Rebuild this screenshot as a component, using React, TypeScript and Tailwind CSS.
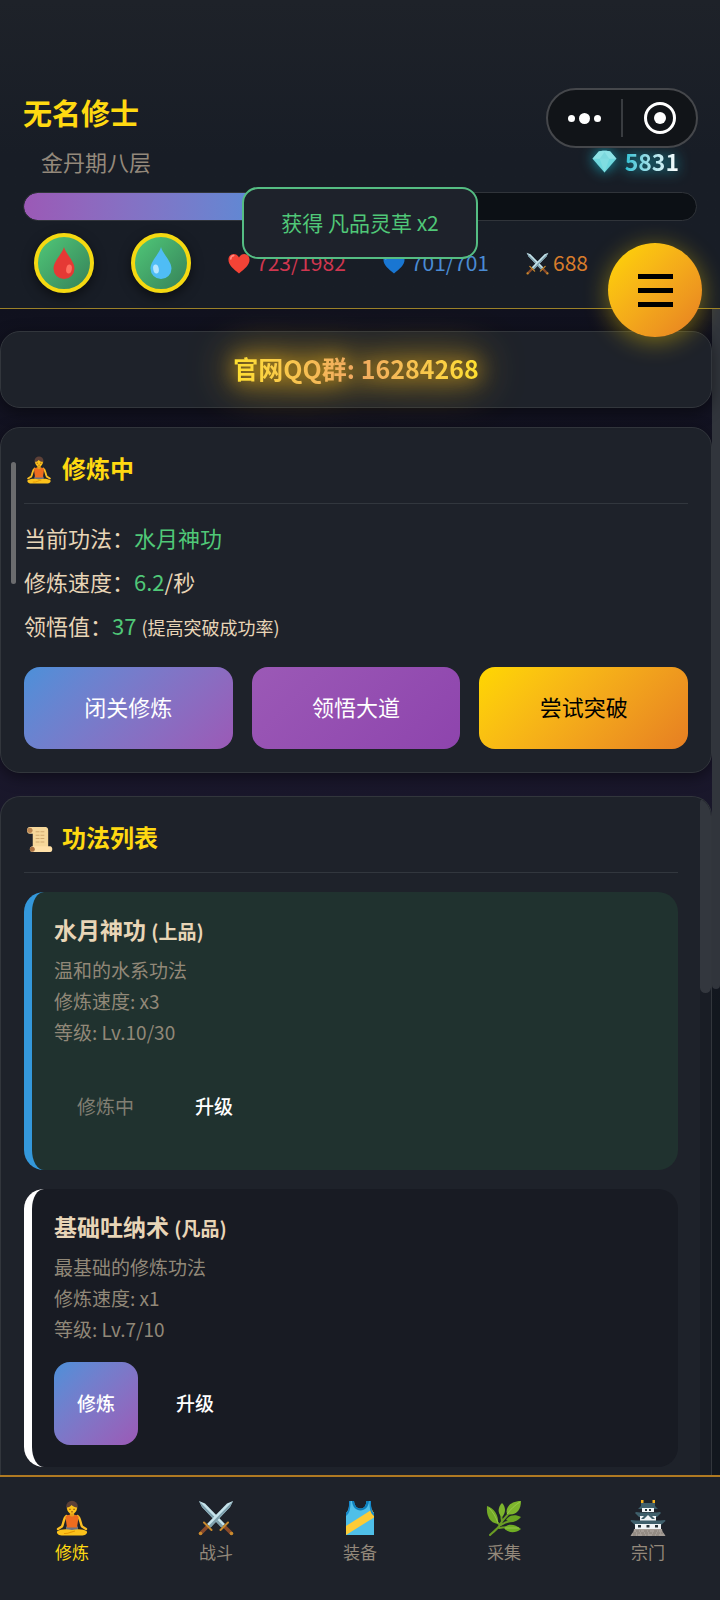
import type { ReactNode } from "react";

type IconProps = { className?: string };

function Drop({ className, color, shine, flip }: IconProps & { color: string; shine: string; flip?: boolean }) {
  return (
    <svg viewBox="0 0 22 32" className={className} aria-hidden="true">
      <path d="M11 0C10 6 .5 14 .5 21.500a10.500 10.500 0 0 0 21 0C21.500 14 12 6 11 0Z" fill={color} />
      <ellipse cx={flip ? 6 : 16} cy="22" rx="2.800" ry="4.500" fill={shine} transform={flip ? "rotate(-10 6 22)" : "rotate(10 16 22)"} />
    </svg>
  );
}

function Heart({ className, color, light }: IconProps & { color: string; light: string }) {
  return (
    <svg viewBox="0 0 24 22" className={className} aria-hidden="true">
      <path d="M12 22C6 17 .5 13 .5 7 .5 3 3.200.6 6.300.6 9 .6 11 2.300 12 4.500 13 2.300 15 .6 17.700.6c3.100 0 5.800 2.400 5.800 6.400C23.500 13 18 17 12 22Z" fill={color} />
      <path d="M3 6c0-2 1.300-3.600 3.200-3.600" stroke={light} strokeWidth="1.800" strokeLinecap="round" fill="none" />
    </svg>
  );
}

function Gem({ className }: IconProps) {
  return (
    <svg viewBox="0 0 26 24" className={className} aria-hidden="true">
      <path d="M7 1.500C9 .5 17 .5 19 1.500L25.500 9 13 23.500.5 9Z" fill="#6fd8de" />
      <path d="M7 1.500C9 .5 17 .5 19 1.500L25.500 9H.5Z" fill="#8ee3e6" />
      <path d="M8 9h10l-5 14.500Z" fill="#80dde1" />
      <path d="m13 2 5 7H8Z" fill="#7cd9de" />
    </svg>
  );
}

function Sword() {
  return (
    <>
      <path d="m1 1 6 2.500L27 24l-3.500 3.500L4 7Z" fill="#c6e4ec" />
      <path d="m1 1 24.500 25-2 1.500L4 7Z" fill="#7d9fac" />
      <path d="m27 27 6 6" stroke="#8a4b2a" strokeWidth="3.600" strokeLinecap="round" />
      <path d="m22.500 30 7.500-7.500" stroke="#c98a2d" strokeWidth="2" strokeLinecap="round" />
      <circle cx="33.500" cy="33.500" r="1.800" fill="#c98a2d" />
    </>
  );
}

function Swords({ className }: IconProps) {
  return (
    <svg viewBox="0 0 36 36" className={className} aria-hidden="true">
      <Sword />
      <g transform="matrix(-1 0 0 1 36 0)">
        <Sword />
      </g>
    </svg>
  );
}

function Meditator({ className }: IconProps) {
  return (
    <svg viewBox="0 0 36 36" className={className} aria-hidden="true">
      <path d="M12.500 16C9.500 18 10 22 8 26.500L4 29" stroke="#fbbf24" strokeWidth="2.400" strokeLinecap="round" fill="none" />
      <path d="M23.500 16c3 2 2.500 6 4.500 10.500l4 2.500" stroke="#fbbf24" strokeWidth="2.400" strokeLinecap="round" fill="none" />
      <path d="M12 30h12v-3.500H12Z" fill="#6b7280" />
      <path d="M3 31.500c3-2 8-3 15-1.500 7-1.500 12-.5 15 1.500.5 2.500-2 4-6 4H9c-4 0-6.500-1.500-6-4Z" fill="#fcc21b" />
      <path d="M10 33.500c5 .5 7-2 11-2.500" stroke="#e59600" strokeWidth="1.100" fill="none" />
      <path d="M11.500 17.500c0-2 2.500-2.700 6.500-2.700s6.500.7 6.500 2.700L23 27.500H13Z" fill="#ed6c1f" />
      <path d="M15.800 12h4.400v3.300c0 1.700-4.400 1.700-4.400 0Z" fill="#e5a01a" />
      <circle cx="18" cy="6.500" r="5.800" fill="#5d4037" />
      <path d="M13 7.500c2 0 3.500-1 4.500-2.500C19 6.500 21 7.500 23 7.500c0 4-2.200 6-5 6s-5-2-5-6Z" fill="#fcc21b" />
      <path d="M15 9.300h1.800m2.400 0H21m-4 2.400c.8.400 1.200.4 2 0" stroke="#7c3f1d" strokeWidth=".8" fill="none" />
    </svg>
  );
}

function Scroll({ className }: IconProps) {
  return (
    <svg viewBox="0 0 28 28" className={className} aria-hidden="true">
      <path d="M4 1h15c4 0 4 2 4 4v17H7V8H4C0 8 0 1 4 1Z" fill="#f6d79a" />
      <path d="M7 21h18c3 0 3 6 0 6H7c-4 0-4-6 0-6Z" fill="#ffe0a8" />
      <circle cx="4" cy="4.500" r="2.800" fill="#b98450" />
      <circle cx="6.500" cy="24" r="2.600" fill="#a87042" />
      <path d="M10 6h10M10 9.500h10M10 13h10M10 16.500h9" stroke="#d2aa70" strokeWidth="1.100" strokeDasharray="4 1" />
    </svg>
  );
}

function Vest({ className }: IconProps) {
  return (
    <svg viewBox="0 0 36 36" className={className} aria-hidden="true">
      <path d="M7 1h5c.5 5 3 7.500 6.500 7.500S24 6 24.500 1H29c-.3 6 .5 10 3 12v22H4V13c2.700-2 3.300-6 3-12Z" fill="#4fbfe8" />
      <path d="M12 1c.5 5 3 7.500 6.500 7.500S24 6 24.500 1H27c-.5 6-4 9.500-8.500 9.500S10.500 7 10 1Z" fill="#0c7fbd" />
      <path d="M4 26 30 9.500c.5 1.500 1 2.700 2 3.500v4.500L4 35Z" fill="#fdcb35" />
      <path d="M7 1c.3 6-.3 10-3 12v3c4-3 4.500-8 4.500-15ZM29 1c-.3 6 .5 10 3 12v3c-4-3-4.500-8-4.500-15Z" fill="#1387c9" />
    </svg>
  );
}

function Herb({ className }: IconProps) {
  return (
    <svg viewBox="0 0 36 36" className={className} aria-hidden="true">
      <path d="M4 35C8 31 12 29 14.500 24 17 19 21 16 27 9M15 25c4-3 7-4 12-4M13 28c5-1 9-1 14 0M14 25C10 22 8 18 6 14M16 21c-1-4-1-7 0-11" stroke="#6a9c24" strokeWidth="2" strokeLinecap="round" fill="none" />
      <path d="M21 14c-2-7 4-13 14-13 0 9-5 15-14 13Z" fill="#7db52c" />
      <path d="M1 6c7 2 12 9 11 18C4 23 0 16 1 6Z" fill="#74ab27" />
      <path d="M16 17c-5-4-4-10 0-14 4 4 4 10 0 14Z" fill="#7db52c" />
      <path d="M20 20c3-5 9-6 15-3-4 5-9 6-15 3Z" fill="#69a421" />
      <path d="M18 28c4-5 11-4 17 1-6 5-13 4-17-1Z" fill="#6fae24" />
      <path d="M21 14C25 9 29 5 34 2M3 8c4 4 7 9 9 15M19 28h14" stroke="#a6ce5b" strokeWidth=".7" fill="none" />
    </svg>
  );
}

function Castle({ className }: IconProps) {
  return (
    <svg viewBox="0 0 36 36" className={className} aria-hidden="true">
      <path d="M11 0h2.500v4H11ZM22.500 0H25v4h-2.500Z" fill="#f2b01e" />
      <path d="M11 3h14v3l3 3H8l3-3Z" fill="#3f5f6b" />
      <path d="M12 8h12v4H12Z" fill="#f1f5f7" />
      <path d="m6 12 4 .5h16l4-.5 1 1-4 4H9l-4-4Z" fill="#3f5f6b" />
      <path d="M10 16h16v5H10Z" fill="#f1f5f7" />
      <path d="m18 12 7 7H11Z" fill="#3f5f6b" />
      <path d="m18 15 4 4h-8Z" fill="#f1f5f7" />
      <path d="m1 20 5 .5h24l5-.5.500 1-4.500 4H5l-4.500-4Z" fill="#3f5f6b" />
      <path d="M5 24h26v5H5Z" fill="#f1f5f7" />
      <path d="M8 25h3v2.500H8Zm8.500 0h3v2.500h-3Zm8.500 0h3v2.500h-3ZM15 9h2v2h-2Zm4 0h2v2h-2Z" fill="#263238" />
      <path d="M4 29h28c0 3 2 4 3.500 7H.5C2 33 4 32 4 29Z" fill="#a59d96" />
      <path d="M3 33h30M6 31h5m3 0h6m4 0h5M3 35h5m4 0h6m4 0h7" stroke="#827971" strokeWidth=".9" strokeDasharray="3 1" />
    </svg>
  );
}

function CardTitle({ icon, children }: { icon: ReactNode; children: ReactNode }) {
  return (
    <h2 className="flex h-[52px] items-start gap-2 border-b border-[#32373e] text-2xl leading-8 font-bold text-[#ffd911]">
      <span className="flex h-9 w-[30px] items-center justify-center">{icon}</span>
      {children}
    </h2>
  );
}

const techniques = [
  { name: "水月神功", grade: "上品", desc: "温和的水系功法", speed: "x3", level: "Lv.10/30", active: true },
  { name: "基础吐纳术", grade: "凡品", desc: "最基础的修炼功法", speed: "x1", level: "Lv.7/10", active: false },
];

const tabs = [
  { label: "修炼", icon: <Meditator className="size-9" /> },
  { label: "战斗", icon: <Swords className="size-9" /> },
  { label: "装备", icon: <Vest className="size-9" /> },
  { label: "采集", icon: <Herb className="size-9" /> },
  { label: "宗门", icon: <Castle className="size-9" /> },
];

const progress = 40;

function Header() {
  return (
    <header className="relative z-20 shrink-0 border-b border-[#9b8128] bg-linear-to-b from-[#1e2229] via-[#181d26] to-[#181d26] px-[23px] pt-[92px] pb-[15px]">
      <h1 className="text-[29px] leading-10 font-bold text-[#ffd911]">无名修士</h1>
      <div className="mt-[14px] flex h-[46px] items-start justify-between pr-[18px] pl-[18px] leading-[30px]">
        <span className="text-[22px] text-[#94897b]">金丹期八层</span>
        <span className="flex items-center gap-2 text-[23px] font-bold drop-shadow-[0_0_7px_#16a5b8]">
          <Gem className="h-[23px] w-[25px]" />
          <span className="bg-linear-to-r from-[#25c2d4] to-white bg-clip-text text-transparent">5831</span>
        </span>
      </div>
      <div
        role="progressbar"
        aria-label="修炼进度"
        aria-valuenow={progress}
        className="h-[29px] overflow-hidden rounded-full border border-[#30343a] bg-[#0c1015]"
      >
        <div className="h-full rounded-full bg-linear-to-r from-[#9b59b6] to-[#4a90d9]" style={{ width: `${progress}%` }} />
      </div>
      <div className="mt-3 flex h-[60px] items-center gap-[37px] pl-[11px] text-[21px] whitespace-nowrap">
        <button aria-label="气血丹" className="flex size-[60px] shrink-0 items-center justify-center rounded-full border-4 border-[#f5d911] bg-linear-135 from-[#50c878] to-[#368259] shadow-[0_4px_12px_#0008]">
          <Drop className="h-8 w-[22px]" color="#e53935" shine="#ff6f60" />
        </button>
        <button aria-label="灵力丹" className="flex size-[60px] shrink-0 items-center justify-center rounded-full border-4 border-[#f5d911] bg-linear-135 from-[#50c878] to-[#368259] shadow-[0_4px_12px_#0008]">
          <Drop className="h-8 w-[22px]" color="#4fbdf5" shine="#b5e6ff" flip />
        </button>
        <span className="flex items-center gap-1.5 text-[#cf364f]">
          <Heart className="h-[21px] w-[22px]" color="#f44336" light="#ff8a80" />
          723/1982
        </span>
        <span className="flex items-center gap-1.5 text-[#4a8bd4]">
          <Heart className="h-[21px] w-[22px]" color="#1976d2" light="#42a5f5" />
          701/701
        </span>
        <span className="flex items-center gap-1 text-[#d87c2b]">
          <Swords className="size-[23px]" />
          688
        </span>
      </div>

      <div className="absolute top-[88px] right-[22px] flex h-[60px] w-[152px] items-center rounded-full border-2 border-[#45474b] bg-[#111418]">
        <button aria-label="更多" className="flex h-full flex-1 items-center justify-center gap-1">
          <span className="size-[7px] rounded-full bg-white" />
          <span className="size-[11px] rounded-full bg-white" />
          <span className="size-[7px] rounded-full bg-white" />
        </button>
        <span className="h-[38px] w-0.5 bg-[#393c40]" />
        <button aria-label="关闭" className="flex h-full flex-1 items-center justify-center">
          <span className="flex size-8 items-center justify-center rounded-full border-[3px] border-white">
            <span className="size-3 rounded-full bg-white" />
          </span>
        </button>
      </div>

      <div role="status" className="absolute top-[187px] left-1/2 flex h-[72px] w-[236px] -translate-x-1/2 items-center justify-center rounded-2xl border-2 border-[#55bd83] bg-[#1e222b] text-[21px] text-[#50c878]">
        获得 凡品灵草 x2
      </div>

      <button aria-label="菜单" className="absolute top-[243px] right-[18px] flex size-[94px] flex-col items-center justify-center gap-[9px] rounded-full bg-linear-135 from-[#ffd700] to-[#e67e22] shadow-[0_4px_24px_#ffd70070]">
        <span className="h-[5px] w-[35px] bg-black" />
        <span className="h-[5px] w-[35px] bg-black" />
        <span className="h-[5px] w-[35px] bg-black" />
      </button>
    </header>
  );
}

export default function App() {
  return (
    <div className="flex h-screen flex-col overflow-hidden bg-[#12151e] font-['Noto_Sans_CJK_SC',sans-serif] text-[#e8d5b7]">
      <Header />

      <main className="relative flex min-h-0 flex-1 overflow-hidden bg-linear-to-b from-[#10111e] via-[#1a172c] via-40% to-[#12171e] to-60%">
        <div className="flex min-w-0 flex-1 flex-col pt-[22px]">
          <section className="relative z-10 flex h-[77px] shrink-0 items-center justify-center rounded-[20px] border border-[#32363c] bg-[#1e222a] pb-0.5 text-[25px] font-bold shadow-[0_4px_16px_#0007]">
            <p className="drop-shadow-[0_0_20px_#d4a017]">
              <span className="block bg-linear-to-r from-[#ffe02e] via-[#f0a860] to-[#ffe02e] bg-clip-text text-transparent drop-shadow-[0_0_10px_#e0a818]">
                官网QQ群: 16284268
              </span>
            </p>
          </section>

          <section className="mt-[19px] shrink-0 rounded-[20px] border border-[#32363c] bg-[#1e222a] px-[23px] pt-6 pb-[23px] shadow-[0_4px_16px_#0007]">
            <CardTitle icon={<Meditator className="size-7" />}>修炼中</CardTitle>
            <div className="mt-[11px] text-[22px] leading-11">
              <p>当前功法：<span className="text-[#50c878]">水月神功</span></p>
              <p>修炼速度：<span className="text-[#50c878]">6.2</span>/秒</p>
              <p>领悟值：<span className="text-[#50c878]">37</span> <small className="text-lg leading-none">(提高突破成功率)</small></p>
            </div>
            <div className="mt-5 grid grid-cols-3 gap-[19px] text-[22px]">
              <button className="h-[82px] rounded-2xl bg-linear-135 from-[#4a90d9] to-[#9b59b6] pb-1 text-white">闭关修炼</button>
              <button className="h-[82px] rounded-2xl bg-linear-135 from-[#9b59b6] to-[#8e44ad] pb-1 text-white">领悟大道</button>
              <button className="h-[82px] rounded-2xl bg-linear-135 from-[#ffd700] to-[#e67e22] pb-1 text-black">尝试突破</button>
            </div>
          </section>

          <section className="mt-[23px] flex min-h-0 flex-1 overflow-hidden rounded-t-[20px] border border-b-0 border-[#32363c] bg-[#1e222a]">
            <div className="min-w-0 flex-1 pt-6 pr-[22px] pl-[23px]">
              <CardTitle icon={<Scroll className="size-[27px]" />}>功法列表</CardTitle>
              <ul className="mt-[19px] flex flex-col gap-[19px]">
                {techniques.map((t) => (
                  <li
                    key={t.name}
                    className={`shrink-0 rounded-[20px] border-l-8 px-[22px] pt-5 pb-[22px] ${t.active ? "border-[#3498db] bg-[#20322f]" : "border-white bg-[#181b23]"}`}
                  >
                    <h3 className="text-[23px] leading-[34px] font-bold">
                      {t.name} <small className="text-[19px] leading-none">({t.grade})</small>
                    </h3>
                    <div className="mt-2 text-[19px] leading-[31px] text-[#918878]">
                      <p>{t.desc}</p>
                      <p>修炼速度: {t.speed}</p>
                      <p>等级: {t.level}</p>
                    </div>
                    <div className="mt-[18px] flex gap-[15px] text-[19px] font-medium text-white">
                      {t.active ? (
                        <button disabled className="h-[83px] px-[23px] font-normal text-[#817f73]">修炼中</button>
                      ) : (
                        <button className="h-[83px] rounded-2xl bg-linear-135 from-[#4a90d9] to-[#9b59b6] px-[23px]">修炼</button>
                      )}
                      <button className="h-[83px] px-[23px]">升级</button>
                    </div>
                  </li>
                ))}
              </ul>
            </div>
            <div className="w-[11px] shrink-0 bg-[#191d25]">
              <div className="h-[196px] rounded-lg bg-[#33373e]" />
            </div>
          </section>
        </div>

        <div className="w-2 shrink-0">
          <div className="h-[680px] rounded-b-lg bg-[#31353c]" />
        </div>

        <div className="absolute top-[153px] left-[11px] h-[122px] w-[5px] rounded-full bg-[#6b6c6e]" />
      </main>

      <nav className="grid shrink-0 grid-cols-5 border-t-2 border-[#b07a22] bg-[#1e222a] pt-[23px] pb-9 text-[17px] leading-6 text-[#94897b]">
        {tabs.map((tab, i) => (
          <button key={tab.label} className={`flex flex-col items-center gap-1 ${i === 0 ? "text-[#ffd911]" : ""}`}>
            {tab.icon}
            {tab.label}
          </button>
        ))}
      </nav>
    </div>
  );
}
